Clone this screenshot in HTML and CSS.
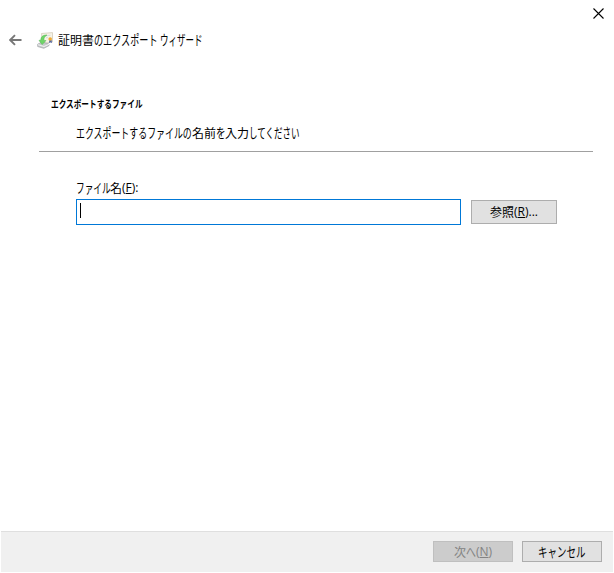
FILE: index.html
```html
<!DOCTYPE html>
<html lang="ja">
<head>
<meta charset="utf-8">
<title>証明書のエクスポート ウィザード</title>
<link rel="stylesheet" href="styles.css">
</head>
<body>
<div class="window">
  <div class="caption">
    <svg class="close" width="11" height="11" viewBox="0 0 11 11"><path d="M.5.5l10 10M10.5.5l-10 10"/></svg>
  </div>
  <header class="header">
    <svg class="back" width="13" height="12" viewBox="0 0 13 12"><path d="M12.5 6H1.5M6 1.2L1.2 6L6 10.8"/></svg>
    <svg class="wizard-icon" width="17" height="17" viewBox="0 0 17 17">
      <path d="M4.5 1.5l11-.9v9.4l-10 1.4z" fill="#f7f3e6" stroke="#d3ccba" stroke-width=".8"/>
      <path d="M8 3.8l5.5-.5M9 5.8l2-.2" stroke="#d5dde0"/>
      <path d="M.7 12.2L5 10l7 2v1.6L6.8 16.3.7 14.5z" fill="#c8cacc" stroke="#a0a4a6" stroke-width=".7"/>
      <path d="M1 12.7l6 1.8L12 12.3" fill="none" stroke="#f2f3f3"/>
      <path d="M10 3C5.6 3 3.8 4.8 3.9 8L2 8.4l3.2 4.2L9 8.6l-2.1-.2C6.7 6 7.8 4.3 10 3z" fill="#6fd567" stroke="#4fb550" stroke-width=".5"/>
      <path d="M12.4 8l-.5 3 1.5-.8 1.6.7-.4-3z" fill="#5268a5"/>
      <circle cx="13.2" cy="7" r="1.8" fill="#efaa35"/>
    </svg>
    <h1 class="title line"><span>証明書</span><span class="run r-title-a"><span>のエクスポート</span></span><span class="run r-title-b"><span>ウィザード</span></span></h1>
  </header>
  <section class="intro">
    <h2 class="heading line"><span class="run r-heading"><span>エクスポートするファイル</span></span></h2>
    <p class="subtitle line"><span class="run r-sub-a"><span>エクスポートするファイルの</span></span><span>名前</span><span class="run r-wo"><span>を</span></span><span>入力</span><span class="run r-sub-b"><span>してください</span></span></p>
  </section>
  <main class="content">
    <label class="line" for="file"><span class="run r-file"><span>ファイル</span></span><span>名</span><span class="latin">(<u>F</u>):</span></label>
    <div class="row">
      <div class="field" id="file"><i class="caret"></i></div>
      <button class="button browse line"><span>参照</span><span class="latin">(<u>R</u>)...</span></button>
    </div>
  </main>
  <footer class="footer">
    <button class="button line" disabled><span>次</span><span class="run r-he"><span>へ</span></span><span class="latin">(<u>N</u>)</span></button>
    <button class="button line"><span class="run r-cancel"><span>キャンセル</span></span></button>
  </footer>
</div>
</body>
</html>
```
FILE: styles.css
```css
* { box-sizing: border-box; }
body {
  margin: 0;
  background: #fff;
  color: #000;
  font: 400 12px/16px "Noto Sans CJK JP", sans-serif;
}
h1, h2, p { margin: 0; font-size: 12px; font-weight: inherit; }
.window { height: 573px; display: flex; flex-direction: column; padding: 0 1px 1px; }
.line { display: flex; white-space: nowrap; line-height: 16px; }

/* Kana is set narrower and slightly taller than its default shape. */
.run { flex: none; display: block; }
.run > span { display: inline-block; transform-origin: 0 80%; }
.r-title-a { width: 66px; }
.r-title-a > span { transform: scale(.76, 1.13); }
.r-title-b { width: 43px; }
.r-title-b > span { transform: scale(.71, 1.13); }
.r-heading > span { transform: scale(.765, 1); }
.r-sub-a { width: 116px; }
.r-sub-a > span { transform: scale(.744, 1.13); }
.r-wo { width: 9px; }
.r-wo > span { transform: scale(.8, 1.13); }
.r-sub-b { width: 52px; }
.r-sub-b > span { transform: scale(.71, 1.13); }
.r-file { width: 34px; }
.r-file > span { transform: scale(.72, 1.13); }
.r-he { width: 10px; }
.r-he > span { transform: scale(.83, 1.13); }
.r-cancel { width: 48px; }
.r-cancel > span { transform: scale(.79, 1.13); }
.latin { font-family: "Open Sans", sans-serif; font-weight: 400; }
u { text-underline-offset: 1px; text-decoration-thickness: 1px; }

.caption { height: 29px; padding: 8px 9px 0 0; display: flex; justify-content: flex-end; }
.close path { fill: none; stroke: #000; stroke-width: 1.1; }
.header { height: 22px; display: flex; align-items: center; padding-left: 8px; }
.back path { fill: none; stroke: #777; stroke-width: 1.9; }
.wizard-icon { margin: 0 4px 0 15px; }
.title { height: 16px; }

.intro { height: 101px; margin: 0 20px 0 38px; padding: 45px 0 0 12px; border-bottom: 1px solid #a0a0a0; }
.heading { font-size: 10px; font-weight: 700; height: 16px; }
.subtitle { margin: 13px 0 0 25px; }

.content { flex: 1; padding: 28px 56px 0 75px; }
.row { display: flex; align-items: center; gap: 10px; margin-top: 3px; }
.field { width: 385px; height: 26px; border: 1px solid #0078d7; padding: 3px; background: #fff; }
.caret { display: block; width: 1px; height: 15px; background: #000; }
.button {
  width: 80px;
  height: 21px;
  padding: 0;
  border: 1px solid #adadad;
  background: #e1e1e1;
  color: #000;
  font: inherit;
  line-height: 16px;
  align-items: center;
  justify-content: center;
}
.browse { width: 86px; height: 24px; }
.button:disabled { background: #ccc; border-color: #bfbfbf; color: #838383; }
.footer {
  height: 41px;
  padding: 9px 11px 0 0;
  display: flex;
  justify-content: flex-end;
  gap: 9px;
  border-top: 1px solid #dfdfdf;
  background: #f0f0f0;
}
```
